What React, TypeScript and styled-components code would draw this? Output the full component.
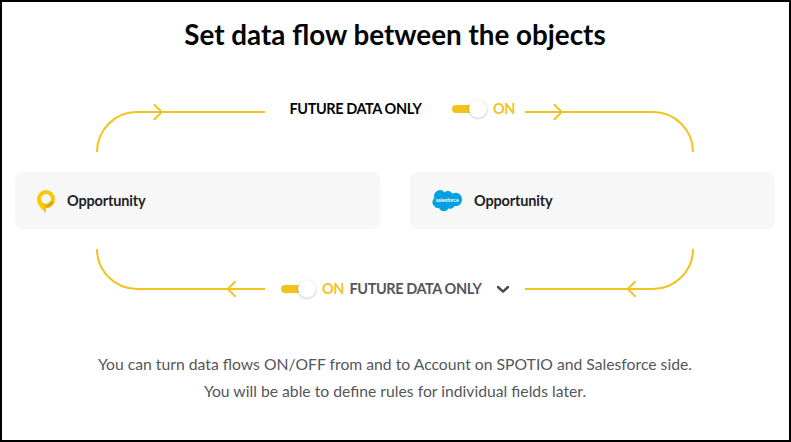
import React from "react";
import styled, { createGlobalStyle } from "styled-components";

const GlobalStyle = createGlobalStyle`
  *, *::before, *::after { box-sizing: border-box; }
  body { margin: 0; background: #fff; font-family: Lato, sans-serif; }
`;

const Frame = styled.main`
  display: flex;
  flex-direction: column;
  width: 791px;
  height: 442px;
  border: 2px solid #000;
  background: #fff;
`;

const Title = styled.h1`
  margin: 14px 0 0;
  padding-right: 1px;
  height: 38px;
  line-height: 38px;
  font-size: 27.8px;
  font-weight: 700;
  text-align: center;
  color: #040506;
`;

const FlowRow = styled.section<{ $side: "top" | "bottom" }>`
  display: grid;
  grid-template-columns: 169px 260px 169px;
  height: 48px;
  margin: ${(p) => (p.$side === "top" ? "50px 0 20px 94px" : "20px 0 0 94px")};
`;

const Controls = styled.div<{ $side: "top" | "bottom" }>`
  display: flex;
  align-items: center;
  height: 18px;
  margin-top: ${(p) => (p.$side === "top" ? "-4px" : "31px")};
  padding-left: ${(p) => (p.$side === "top" ? "24.5px" : "16px")};
`;

const Label = styled.span<{ $color: string; $width: number }>`
  flex: none;
  width: ${(p) => p.$width}px;
  font-size: 14.5px;
  line-height: 18px;
  font-weight: 700;
  letter-spacing: -0.42px;
  white-space: nowrap;
  color: ${(p) => p.$color};
`;

const Switch = styled.button`
  display: flex;
  flex: none;
  align-items: center;
  width: 35px;
  height: 18px;
  margin-right: 6px;
  padding: 0;
  border: 0;
  background: none;
`;

const Track = styled.span`
  flex: none;
  width: 26px;
  height: 8px;
  border-radius: 4px;
  background: #f2c31f;
`;

const Knob = styled.span`
  flex: none;
  width: 18px;
  height: 18px;
  margin-left: -9.5px;
  border-radius: 50%;
  background: #fff;
  box-shadow: 0 0.5px 2px rgba(30, 40, 50, 0.38);
`;

const Cards = styled.section`
  display: grid;
  grid-template-columns: 365px 365px;
  gap: 30px;
  padding-left: 13px;
`;

const Card = styled.article`
  display: flex;
  align-items: center;
  gap: 12px;
  height: 57px;
  padding-left: 22px;
  border-radius: 8px;
  background: #f7f7f7;
`;

const CardName = styled.span`
  font-size: 14.5px;
  line-height: 19px;
  font-weight: 700;
  letter-spacing: -0.17px;
  color: #202224;
`;

const Description = styled.p`
  margin: 53px 0 0;
  padding-right: 1px;
  font-size: 15.72px;
  line-height: 27px;
  text-align: center;
  color: #55565b;
`;

const Drawing = styled.svg`
  display: block;
  flex: none;
`;

const paths = {
  topLeft: "M1 48 A40 40 0 0 1 41 8 H169 M58 0.3 L65.7 8 L58 15.7",
  topRight: "M0 8 H128 A40 40 0 0 1 168 48 M29 0.3 L36.7 8 L29 15.7",
  bottomLeft: "M1 0 A40 40 0 0 0 41 40 H169 M139.5 32.3 L131.8 40 L139.5 47.7",
  bottomRight: "M0 40 H128 A40 40 0 0 0 168 0 M110.5 32.3 L102.8 40 L110.5 47.7",
};

function Connector({ corner }: { corner: keyof typeof paths }) {
  return (
    <Drawing width="169" height="48" viewBox="0 0 169 48" fill="none">
      <path d={paths[corner]} stroke="#f2c31f" strokeWidth="2" />
    </Drawing>
  );
}

function Toggle() {
  return (
    <Switch role="switch" aria-checked="true">
      <Track />
      <Knob />
    </Switch>
  );
}

function SpotioLogo() {
  return (
    <Drawing width="18" height="24" viewBox="0 0 18 24">
      <defs>
        <linearGradient id="pin" x1="0" y1="0" x2="1" y2="0">
          <stop offset="0" stopColor="#f8c900" />
          <stop offset="0.55" stopColor="#d9a514" />
          <stop offset="1" stopColor="#e9b80a" />
        </linearGradient>
      </defs>
      <path
        fillRule="evenodd"
        fill="#f8c900"
        d="M9 1a9 9 0 0 1 9 9a9 9 0 0 1-9 9v5C5 20 0 16 0 10a9 9 0 0 1 9-9Zm0 4a5 5 0 1 0 0 10a5 5 0 0 0 0-10Z"
      />
      <path fill="url(#pin)" d="M5.5 13.6A5 5 0 0 0 13.5 12.3L17.7 12.2A9 9 0 0 1 9 19Q7.5 16.5 5.5 13.6Z" />
    </Drawing>
  );
}

function SalesforceLogo() {
  return (
    <Drawing width="30" height="22" viewBox="0 0 30 22">
      <path
        fill="#00a1e0"
        d="M12.5 2.3A5.2 5.2 0 0 1 20.6 3.7A6.2 6.2 0 0 1 29.9 9.7A6.2 6.2 0 0 1 22.5 16A4.6 4.6 0 0 1 16.6 18.2A5.3 5.3 0 0 1 7 18A4.8 4.8 0 0 1 1.9 15.7A5.2 5.2 0 0 1 2.4 8A5.9 5.9 0 0 1 12.5 2.3Z"
      />
      <text
        x="3.8"
        y="11.8"
        textLength="23"
        lengthAdjust="spacingAndGlyphs"
        fill="#fff"
        fontFamily="Lato, sans-serif"
        fontSize="6"
        fontWeight="700"
      >
        salesforce
      </text>
    </Drawing>
  );
}

function Chevron() {
  return (
    <Drawing width="14" height="10" viewBox="0 0 14 10" fill="none">
      <path d="M2 3 L7 7.6 L12 3" stroke="#46484d" strokeWidth="2.4" strokeLinecap="round" strokeLinejoin="round" />
    </Drawing>
  );
}

export default function App() {
  return (
    <>
      <GlobalStyle />
      <Frame>
        <Title>Set data flow between the objects</Title>
        <FlowRow $side="top">
          <Connector corner="topLeft" />
          <Controls $side="top">
            <Label $color="#040506" $width={162.5}>FUTURE DATA ONLY</Label>
            <Toggle />
            <Label $color="#f2c31f" $width={24}>ON</Label>
          </Controls>
          <Connector corner="topRight" />
        </FlowRow>
        <Cards>
          <Card>
            <SpotioLogo />
            <CardName>Opportunity</CardName>
          </Card>
          <Card>
            <SalesforceLogo />
            <CardName>Opportunity</CardName>
          </Card>
        </Cards>
        <FlowRow $side="bottom">
          <Connector corner="bottomLeft" />
          <Controls $side="bottom">
            <Toggle />
            <Label $color="#f2c31f" $width={27.5}>ON</Label>
            <Label $color="#55565b" $width={146.5}>FUTURE DATA ONLY</Label>
            <Chevron />
          </Controls>
          <Connector corner="bottomRight" />
        </FlowRow>
        <Description>
          You can turn data flows ON/OFF from and to Account on SPOTIO and Salesforce side.
          <br />
          You will be able to define rules for individual fields later.
        </Description>
      </Frame>
    </>
  );
}
